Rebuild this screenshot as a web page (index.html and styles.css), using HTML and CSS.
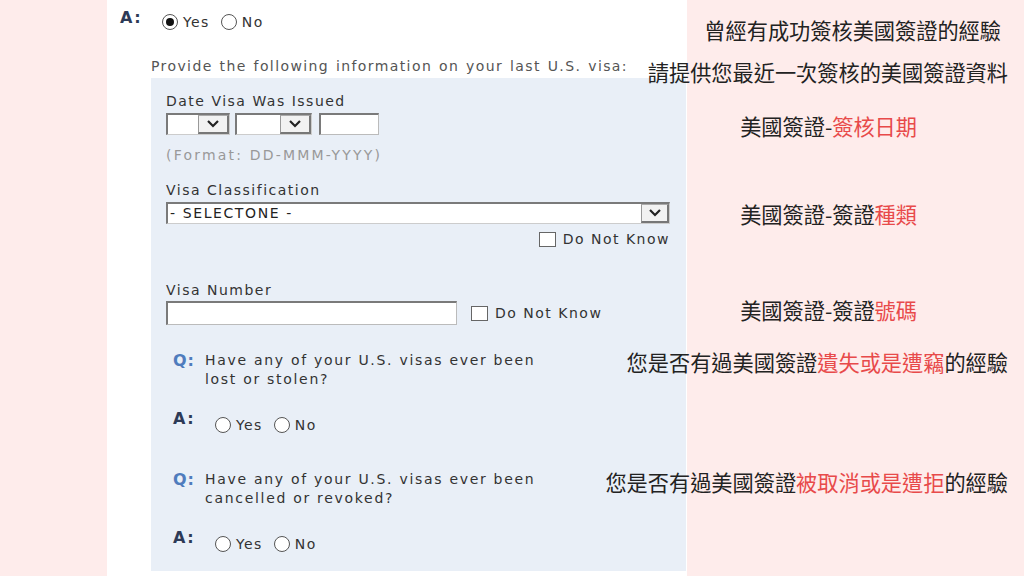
FILE: index.html
```html
<!DOCTYPE html>
<html>
<head>
  <meta charset="utf-8">
  <title>Previous U.S. Visa</title>
  <link rel="stylesheet" href="styles.css">
</head>
<body>
  <div class="page">
    <div class="shot">
      <div class="answer answer-top">
        <span class="qa-a">A:</span>
        <span class="radio on"></span><span class="opt">Yes</span>
        <span class="radio"></span><span class="opt">No</span>
      </div>
      <p class="provide">Provide the following information on your last U.S. visa:</p>

      <div class="panel">
        <div class="label label-first">Date Visa Was Issued</div>
        <div class="date-row">
          <div class="select sel-day"><span class="sel-text"></span><span class="sel-btn"><svg width="14" height="10" viewBox="0 0 14 10"><polyline points="2,2 7,7 12,2" fill="none" stroke="#222" stroke-width="2.2"/></svg></span></div>
          <div class="select sel-month"><span class="sel-text"></span><span class="sel-btn"><svg width="14" height="10" viewBox="0 0 14 10"><polyline points="2,2 7,7 12,2" fill="none" stroke="#222" stroke-width="2.2"/></svg></span></div>
          <div class="textbox tb-year"></div>
        </div>
        <div class="hint">(Format: DD-MMM-YYYY)</div>

        <div class="label label-class">Visa Classification</div>
        <div class="select sel-wide"><span class="sel-text">- SELECTONE -</span><span class="sel-btn"><svg width="14" height="10" viewBox="0 0 14 10"><polyline points="2,2 7,7 12,2" fill="none" stroke="#222" stroke-width="2.2"/></svg></span></div>
        <div class="dnk dnk-right"><span class="check"></span><span>Do Not Know</span></div>

        <div class="label label-number">Visa Number</div>
        <div class="number-row">
          <div class="textbox tb-number"></div>
          <div class="dnk"><span class="check"></span><span>Do Not Know</span></div>
        </div>

        <div class="question q-first">
          <span class="qa-q">Q:</span>
          <span class="q-text">Have any of your U.S. visas ever been<br>lost or stolen?</span>
        </div>
        <div class="answer answer-sub">
          <span class="qa-a">A:</span>
          <span class="radio"></span><span class="opt">Yes</span>
          <span class="radio"></span><span class="opt">No</span>
        </div>

        <div class="question q-second">
          <span class="qa-q">Q:</span>
          <span class="q-text">Have any of your U.S. visas ever been<br>cancelled or revoked?</span>
        </div>
        <div class="answer answer-sub">
          <span class="qa-a">A:</span>
          <span class="radio"></span><span class="opt">Yes</span>
          <span class="radio"></span><span class="opt">No</span>
        </div>
      </div>
    </div>

    <div class="notes">
      <div class="note note-1">曾經有成功簽核美國簽證的經驗</div>
      <div class="note note-2">請提供您最近一次簽核的美國簽證資料</div>
      <div class="note note-3 note-short">美國簽證-<em>簽核日期</em></div>
      <div class="note note-4 note-short">美國簽證-簽證<em>種類</em></div>
      <div class="note note-5 note-short">美國簽證-簽證<em>號碼</em></div>
      <div class="note note-6">您是否有過美國簽證<em>遺失或是遭竊</em>的經驗</div>
      <div class="note note-7">您是否有過美國簽證<em>被取消或是遭拒</em>的經驗</div>
    </div>
  </div>
</body>
</html>
```

FILE: styles.css
```css
body {
  margin: 0;
  background-color: #feeceb;
  font-family: "DejaVu Sans", Verdana, sans-serif;
  font-size: 14px;
  color: #333;
}

.page {
  position: relative;
  width: 1024px;
  height: 576px;
  overflow: hidden;
}

/* screenshot of the form */
.shot {
  margin-left: 107px;
  width: 580px;
  height: 576px;
  background-color: #fff;
  box-sizing: border-box;
  padding-top: 9px;
}

.answer {
  display: flex;
  align-items: flex-start;
}

.answer-top {
  padding-left: 13px;
  height: 24px;
}

.qa-a {
  font-weight: bold;
  font-size: 16px;
  line-height: 18px;
  color: #2d3a57;
  letter-spacing: 1.5px;
  width: 42px;
}

.radio {
  width: 16px;
  height: 16px;
  border: 1px solid #555;
  border-radius: 50%;
  background-color: #fff;
  box-sizing: border-box;
  margin-top: 5px;
  position: relative;
  flex-shrink: 0;
}

.radio.on::after {
  content: "";
  position: absolute;
  left: 3px;
  top: 3px;
  width: 8px;
  height: 8px;
  border-radius: 50%;
  background-color: #111;
}

.opt {
  line-height: 18px;
  margin-top: 4px;
  margin-left: 5px;
  margin-right: 11px;
  letter-spacing: 1.4px;
  color: #333;
}

.provide {
  margin: 25px 0 0 44px;
  line-height: 16px;
  color: #555;
  letter-spacing: 1.4px;
  word-spacing: 1px;
}

.panel {
  margin-left: 44px;
  margin-top: 4px;
  width: 535px;
  height: 493px;
  background-color: #e9eff7;
  box-sizing: border-box;
  padding: 15px 16px 0 15px;
}

.label {
  line-height: 16px;
  color: #333;
  letter-spacing: 1.5px;
}

.label-class {
  margin-top: 19px;
}

.label-number {
  margin-top: 34px;
}

/* select boxes */
.select {
  display: flex;
  height: 22px;
  box-sizing: border-box;
  border-top: 2px solid #7a7a7a;
  border-left: 2px solid #7a7a7a;
  border-bottom: 1px solid #ccc;
  border-right: 1px solid #ccc;
  background-color: #fff;
}

.sel-text {
  flex: 1;
  font-size: 14px;
  line-height: 19px;
  padding-left: 2px;
  color: #222;
}

.sel-btn {
  width: 31px;
  display: flex;
  align-items: center;
  justify-content: center;
  background-color: #f2f2f2;
  border-left: 1px solid #999;
  border-top: 1px solid #aaa;
  border-right: 2px solid #777;
  border-bottom: 2px solid #777;
  box-sizing: border-box;
}

.date-row {
  display: flex;
  gap: 5px;
  margin-top: 4px;
}

.sel-day {
  width: 64px;
}

.sel-month {
  width: 77px;
}

.textbox {
  height: 24px;
  box-sizing: border-box;
  background-color: #fff;
  border-top: 2px solid #7a7a7a;
  border-left: 2px solid #7a7a7a;
  border-bottom: 1px solid #bbb;
  border-right: 1px solid #bbb;
}

.tb-year {
  width: 60px;
  height: 22px;
  margin-left: 2px;
}

.hint {
  margin-top: 12px;
  line-height: 16px;
  color: #999;
  letter-spacing: 2.2px;
}

.sel-wide {
  margin-top: 4px;
  width: 504px;
}

.sel-wide .sel-text {
  letter-spacing: 1.6px;
}

.sel-wide .sel-btn {
  width: 28px;
}

.dnk {
  display: flex;
  align-items: center;
  gap: 7px;
  letter-spacing: 1.5px;
  color: #333;
  line-height: 17px;
}

.dnk-right {
  justify-content: flex-end;
  margin-top: 7px;
}

.check {
  width: 17px;
  height: 15px;
  box-sizing: border-box;
  border: 1px solid #666;
  background-color: #fff;
}

.number-row {
  display: flex;
  align-items: center;
  gap: 14px;
  margin-top: 3px;
}

.tb-number {
  width: 291px;
}

.question {
  display: flex;
  padding-left: 7px;
  line-height: 19px;
}

.q-first {
  margin-top: 26px;
}

.q-second {
  margin-top: 36px;
}

.qa-q {
  width: 32px;
  font-weight: bold;
  font-size: 16px;
  color: #4f7cbd;
  letter-spacing: 1px;
}

.q-text {
  color: #333;
  letter-spacing: 1.7px;
}

.answer-sub {
  padding-left: 7px;
  margin-top: 21px;
}

.answer-sub .radio {
  margin-top: 7px;
}

.answer-sub .opt {
  margin-top: 6px;
}

/* Chinese notes on the right */
.notes {
  position: absolute;
  top: 0;
  right: 16px;
  display: flex;
  flex-direction: column;
  align-items: flex-end;
  font-family: "Noto Sans CJK TC", "Noto Sans CJK SC", sans-serif;
  font-size: 21.2px;
  line-height: 30px;
  color: #222;
}

.note em {
  font-style: normal;
  color: #e84a4a;
}

.note-1 { margin-top: 15px; margin-right: 7px; }
.note-2 { margin-top: 12px; }
.note-3 { margin-top: 24px; }
.note-4 { margin-top: 58px; }
.note-5 { margin-top: 66px; }
.note-6 { margin-top: 22px; }
.note-7 { margin-top: 90px; }

.note-short {
  margin-right: 91px;
}
```
